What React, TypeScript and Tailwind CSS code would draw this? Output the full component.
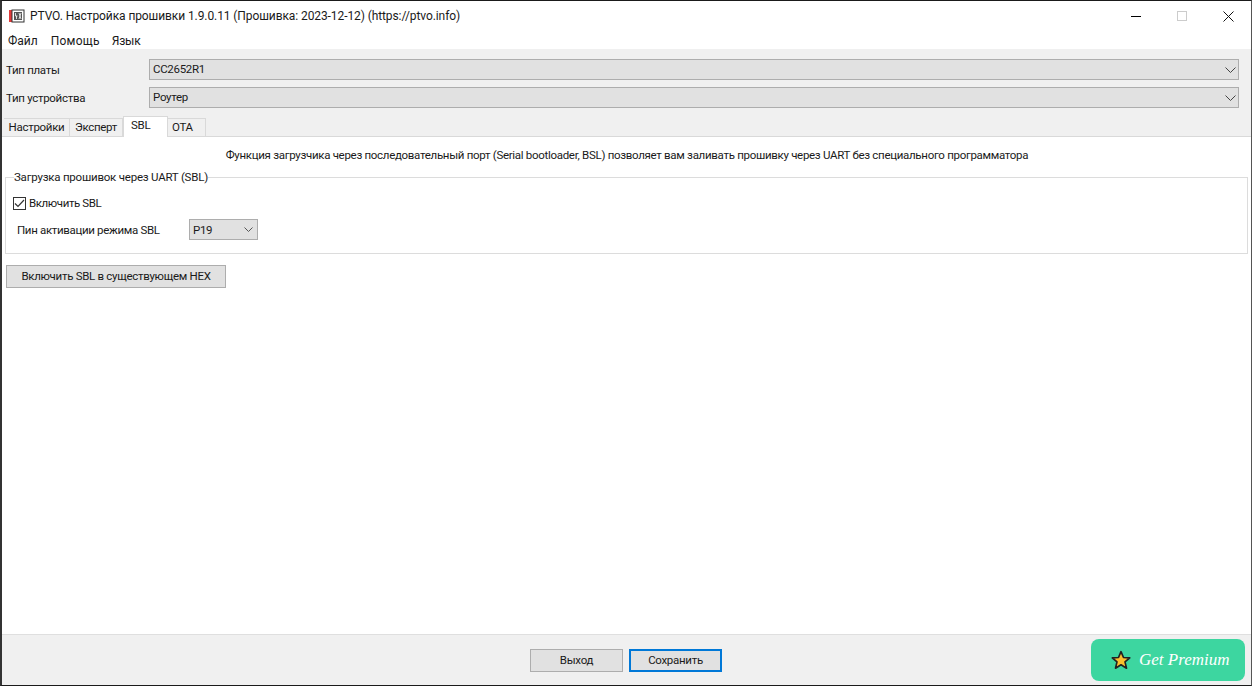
function Chevron({ small }: { small?: boolean }) {
  return small ? (
    <svg width="9" height="5" viewBox="0 0 9 5" fill="none" stroke="#555" strokeWidth="1">
      <path d="M0.5 0.5 L4.5 4.5 L8.5 0.5" />
    </svg>
  ) : (
    <svg width="11" height="6" viewBox="0 0 11 6" fill="none" stroke="#444" strokeWidth="1">
      <path d="M0.5 0.5 L5.5 5.5 L10.5 0.5" />
    </svg>
  );
}

function Select({ value, className, small }: { value: string; className: string; small?: boolean }) {
  return (
    <div className={`flex h-[21px] items-center justify-between border border-[#adadad] bg-[#e1e1e1] pl-[3px] ${className}`}>
      <span className="pt-[1px]">{value}</span>
      <Chevron small={small} />
    </div>
  );
}

function Tab({ label, className }: { label: string; className: string }) {
  return (
    <div className={`flex h-[18px] items-center border border-l-0 border-b-0 border-[#d9d9d9] bg-[#f0f0f0] pt-[1px] ${className}`}>
      {label}
    </div>
  );
}

export default function App() {
  return (
    <div className="relative flex h-[686px] w-[1252px] flex-col overflow-hidden border-t border-b border-l-2 border-r border-t-[#1a1a1a] border-b-[#1a1a1a] border-l-[#333] border-r-[#555] bg-white font-['Roboto',sans-serif] text-[11.5px] tracking-[-0.3px] text-[#1a1a1a]">
      {/* title bar */}
      <div className="flex h-[30px] shrink-0 items-center bg-white">
        <svg width="16" height="14" viewBox="0 0 16 14" className="ml-[7px] mr-[5px]">
          <rect x="0" y="1" width="3" height="12" fill="#e23a3a" />
          <rect x="3" y="1" width="12" height="12" fill="#fff" stroke="#333" strokeWidth="1" />
          <rect x="5" y="3" width="8" height="8" fill="#555" />
          <path d="M6.5 4v3h2M7.5 7v3M10 4l2 6M12 4l-2 6" stroke="#fff" strokeWidth="0.8" fill="none" />
        </svg>
        <span className="text-[12px] tracking-[-0.09px]">PTVO. Настройка прошивки 1.9.0.11 (Прошивка: 2023-12-12) (https://ptvo.info)</span>
        <div className="ml-auto flex items-center">
          <div className="mr-[36px] h-[1px] w-[10px] bg-black" />
          <div className="mr-[36px] h-[10px] w-[10px] border border-[#ccc]" />
          <svg width="11" height="11" viewBox="0 0 11 11" stroke="#111" strokeWidth="1" className="mr-[17px]">
            <path d="M0.5 0.5 L10.5 10.5 M10.5 0.5 L0.5 10.5" />
          </svg>
        </div>
      </div>

      {/* menu */}
      <div className="flex h-[18px] shrink-0 items-center bg-white pl-[6px] pt-[2px] text-[12px] tracking-normal">
        <span>Файл</span>
        <span className="ml-[13px] tracking-[0.25px]">Помощь</span>
        <span className="ml-[12px] tracking-[-0.2px]">Язык</span>
      </div>

      {/* board settings */}
      <div className="flex shrink-0 flex-col bg-[#f0f0f0] pr-[12px] pt-[10px]">
        <div className="flex h-[21px] items-center">
          <span className="w-[147px] pl-[4px] pt-[2px]">Тип платы</span>
          <Select value="CC2652R1" className="flex-1 pr-[2px]" />
        </div>
        <div className="mt-[7px] flex h-[21px] items-center">
          <span className="w-[147px] pl-[4px] pt-[2px]">Тип устройства</span>
          <Select value="Роутер" className="flex-1 pr-[2px]" />
        </div>
        <div className="mt-[8px] flex h-[20px] items-end pl-[2px]">
          <Tab label="Настройки" className="w-[66px] justify-center border-l" />
          <Tab label="Эксперт" className="w-[53px] justify-center" />
          <div className="relative z-10 mb-[-1px] h-[21px] w-[45px] border border-b-0 border-[#d9d9d9] bg-white pl-[7px]">
            SBL
          </div>
          <Tab label="OTA" className="w-[38px] pl-[4px]" />
        </div>
      </div>

      {/* tab content */}
      <div className="flex flex-1 flex-col border-t border-[#d9d9d9] bg-white pl-[3px] pr-[3px]">
        <p className="mt-[10px] pl-[1px] text-center leading-[16px]">
          Функция загрузчика через последовательный порт (Serial bootloader, BSL) позволяет вам заливать прошивку через UART без специального программатора
        </p>
        <fieldset className="mt-[7px] h-[84px] border border-[#dcdcdc] pl-[7px]">
          <legend className="ml-[1px] px-0 leading-[14px] tracking-[-0.22px]">Загрузка прошивок через UART (SBL)</legend>
          <div className="mt-[10px] flex items-center">
            <div className="flex h-[13px] w-[13px] items-center justify-center border border-[#333] bg-white">
              <svg width="11" height="9" viewBox="0 0 11 9" fill="none" stroke="#333" strokeWidth="1.2">
                <path d="M1 4.5 L4 7.5 L10 1" />
              </svg>
            </div>
            <span className="ml-[3px] pt-[1px] tracking-[-0.4px]">Включить SBL</span>
          </div>
          <div className="mt-[7px] flex items-center pl-[4px]">
            <span className="w-[172px] pt-[2px] tracking-[-0.33px]">Пин активации режима SBL</span>
            <Select value="P19" className="w-[69px] pr-[4px]" small />
          </div>
        </fieldset>
        <button className="mt-[11px] ml-[1px] h-[23px] w-[220px] border border-[#adadad] bg-[#e1e1e1] pt-[1px]">
          Включить SBL в существующем HEX
        </button>
      </div>

      {/* footer */}
      <div className="flex h-[51px] shrink-0 items-start justify-center gap-[6px] border-t border-[#dfdfdf] bg-[#f0f0f0] pt-[14px] pr-[1px]">
        <button className="h-[23px] w-[93px] border border-[#adadad] bg-[#e1e1e1] pt-[1px]">Выход</button>
        <button className="h-[23px] w-[93px] border-2 border-[#0078d7] bg-[#e1e1e1] pt-[1px]">Сохранить</button>
      </div>

      {/* premium badge sits over the window */}
      <div className="absolute bottom-[4px] right-[6px] flex h-[42px] w-[154px] items-center rounded-[8px] bg-[#3dd6a0] pl-[20px]">
        <svg width="20" height="20" viewBox="0 0 24 24" fill="#fbbf2e" stroke="#222" strokeWidth="2" strokeLinejoin="round">
          <path d="M12 2 L15 9 L22.5 9.5 L16.8 14.3 L18.6 21.8 L12 17.8 L5.4 21.8 L7.2 14.3 L1.5 9.5 L9 9 Z" />
        </svg>
        <span className="ml-[8px] font-['Liberation_Serif',serif] text-[17px] italic tracking-normal text-white">Get Premium</span>
      </div>
    </div>
  );
}
